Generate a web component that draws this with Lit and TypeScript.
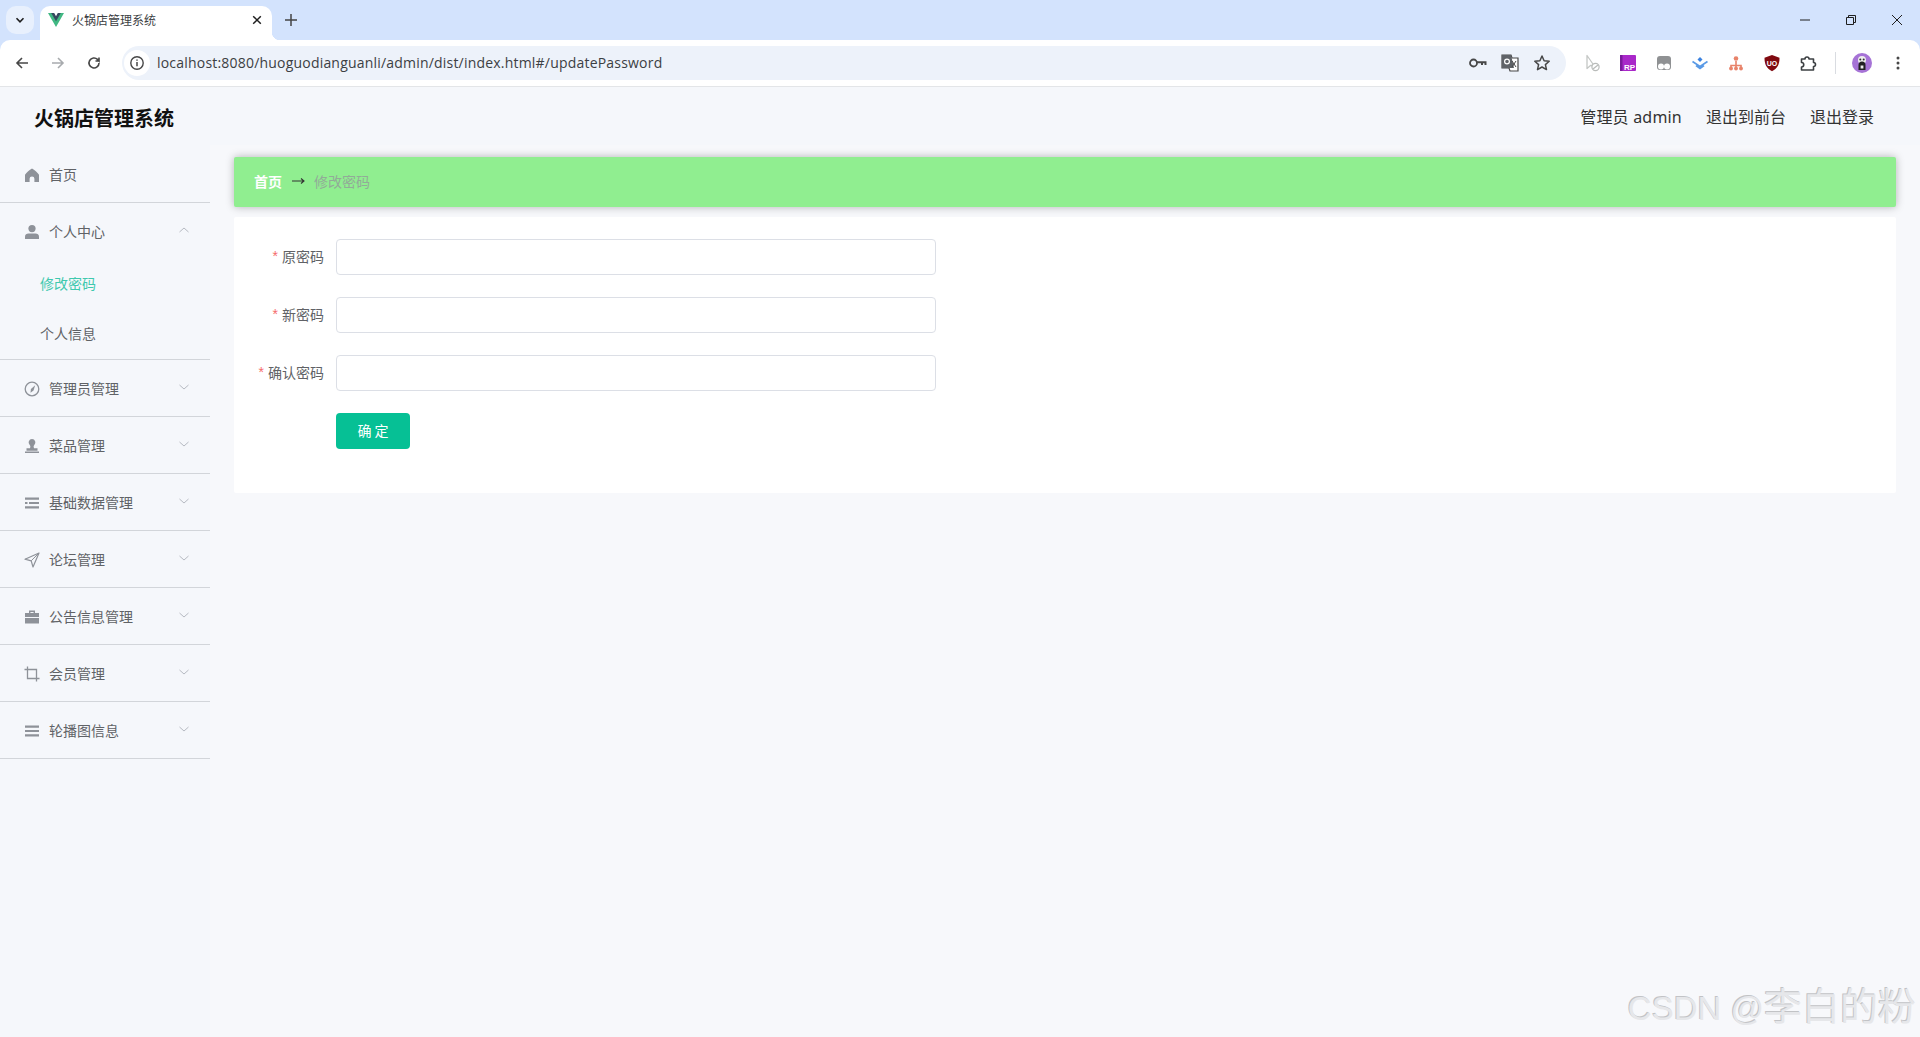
import { LitElement, html, css, svg } from 'lit';
import { customElement } from 'lit/decorators.js';
import { classMap } from 'lit/directives/class-map.js';

const icons = {
  home: svg`<path d="M8 1.500C5.500 3.200 2.600 5.300 1 7.800V15h4.600v-3.200a2.400 2.400 0 0 1 4.800 0V15H15V7.800C13.400 5.300 10.500 3.200 8 1.500z" fill="currentColor"/>`,
  user: svg`<circle cx="8" cy="4.600" r="3.600" fill="currentColor"/><path d="M1 15v-2.600C1 10.500 2.600 9.400 4.500 9.400h7c1.900 0 3.500 1.100 3.500 3V15z" fill="currentColor"/>`,
  compass: svg`<circle cx="8" cy="8" r="6.800" fill="none" stroke="currentColor" stroke-width="1.300"/><path d="M11.200 4.200 9.500 9.400 6.500 11.800 6.900 8z" fill="currentColor"/>`,
  stamp: svg`<path d="M8 1a3.400 3.400 0 0 0-2.300 5.900c.5.600.8 1.200.6 2.100L6 10.200H2.500v2.500h11v-2.500H10l-.3-1.200c-.2-.9.100-1.500.6-2.100A3.400 3.400 0 0 0 8 1z" fill="currentColor"/><rect x="1" y="13.500" width="14" height="1.500" fill="currentColor"/>`,
  fold: svg`<path d="M1 2.600h14v2.200H1zM5 6.900h10v2.200H5zM1 11.200h14v2.200H1zM1 6.900h2.500v2.200H1z" fill="currentColor"/>`,
  plane: svg`<path d="M15 1 1 7.200l6.200 1.600L9 15z" fill="none" stroke="currentColor" stroke-width="1.200" stroke-linejoin="round"/><path d="M15 1 7.200 8.800" stroke="currentColor" stroke-width="1"/>`,
  case: svg`<path d="M5 4V1.500h6V4h4v4H1V4zm1.400 0h3.200V2.900H6.400z" fill="currentColor" fill-rule="evenodd"/><path d="M1 9h14v5.500H1z" fill="currentColor"/>`,
  crop: svg`<path d="M3.500.5v12h12M.5 3.500h12v12" fill="none" stroke="currentColor" stroke-width="1.300"/>`,
  lines: svg`<path d="M1 2.600h14v2.200H1zM1 6.900h14v2.200H1zM1 11.200h14v2.200H1z" fill="currentColor"/>`,
};

type Item = { label: string; icon: keyof typeof icons; arrow?: boolean; open?: boolean; first?: boolean };

const menu: Item[] = [
  { label: '首页', icon: 'home', first: true },
  { label: '个人中心', icon: 'user', arrow: true, open: true },
  { label: '管理员管理', icon: 'compass', arrow: true },
  { label: '菜品管理', icon: 'stamp', arrow: true },
  { label: '基础数据管理', icon: 'fold', arrow: true },
  { label: '论坛管理', icon: 'plane', arrow: true },
  { label: '公告信息管理', icon: 'case', arrow: true },
  { label: '会员管理', icon: 'crop', arrow: true },
  { label: '轮播图信息', icon: 'lines', arrow: true },
];

const subMenu = [
  { label: '修改密码', active: true },
  { label: '个人信息', active: false },
];

const fields = ['原密码', '新密码', '确认密码'];

const extensions = [
  svg`<path d="M5 2.500v13l3.500-3h3.500z" fill="none" stroke="#c4c7c5" stroke-width="1.300" stroke-linejoin="round"/><circle cx="13.500" cy="14" r="3.600" fill="#fff" stroke="#b9bcba" stroke-width="1.200"/><path d="m11 16 5-4" stroke="#b9bcba" stroke-width="1.200"/>`,
  svg`<rect x="2" y="2" width="16" height="16" rx="1" fill="#a928c9"/><rect x="2" y="2" width="2.500" height="16" fill="#7a1a9c"/><text x="6" y="16.500" font-size="8" font-weight="700" fill="#fff" font-family="Liberation Sans">RP</text>`,
  svg`<path d="M3 6a3 3 0 0 1 3-3h8a3 3 0 0 1 3 3v8a3 3 0 0 1-3 3H6a3 3 0 0 1-3-3z" fill="#8f9193"/><circle cx="7" cy="13.500" r="3" fill="#fff"/><circle cx="13" cy="13.500" r="3" fill="#fff"/>`,
  svg`<path d="m2.500 8.500 7.500 5 7.500-5M6 12.500l4 3 4-3" fill="none" stroke="#5a9ae6" stroke-width="1.700"/><path d="m10 4 2.500 2.500L10 9 7.500 6.500z" fill="#3b82e0"/>`,
  svg`<circle cx="10" cy="5.500" r="2.300" fill="#e8836a"/><path d="M10 8v7M5 15v-2.500h10V15" fill="none" stroke="#e8836a" stroke-width="1.600"/><circle cx="5" cy="15.500" r="1.900" fill="#e8836a"/><circle cx="10" cy="15.500" r="1.900" fill="#e8836a"/><circle cx="15" cy="15.500" r="1.900" fill="#e8836a"/>`,
  svg`<path d="M10 2 17.500 4.800c0 6.200-1.700 10.400-7.500 13.400C4.200 15.200 2.500 11 2.500 4.800z" fill="#800a10"/><text x="10" y="12.800" text-anchor="middle" font-size="7" font-weight="700" fill="#fff" font-family="Liberation Sans">UO</text>`,
  svg`<path d="M3.500 6H7a2 2 0 0 1 4 0h4.500v3.500a2 2 0 0 1 0 4V17H3.500v-3a2.200 2.200 0 0 0 0-4.500z" fill="none" stroke="#3c4043" stroke-width="1.600" stroke-linejoin="round"/>`,
];

@customElement('app-root')
export class AppRoot extends LitElement {
  static styles = css`
    :host {
      display: block;
      position: relative;
      height: 1037px;
      overflow: hidden;
      font-family: 'Noto Sans CJK SC', 'Liberation Sans', sans-serif;
      color: #333;
      background: #f7f8fb;
    }

    /* browser chrome */
    .chrome-wrap {
      background: #d3e3fd;
    }

    .strip {
      display: flex;
      height: 40px;
      box-sizing: border-box;
      padding: 6px 0 0 6px;
    }

    .tab-list {
      width: 28px;
      height: 28px;
      border-radius: 10px;
      background: #e8f0fd;
      display: flex;
      align-items: center;
      justify-content: center;
    }

    .tab {
      position: relative;
      width: 232px;
      height: 34px;
      margin-left: 6px;
      box-sizing: border-box;
      padding: 0 9px 6px 8px;
      display: flex;
      align-items: center;
      background: #fff;
      border-radius: 10px 10px 0 0;
      font-size: 12px;
      color: #3c4043;
    }

    .tab::after {
      content: '';
      position: absolute;
      right: -8px;
      bottom: 0;
      width: 8px;
      height: 8px;
      background: radial-gradient(circle at 100% 0, transparent 8px, #fff 8.5px);
    }

    .tab-title {
      flex: 1;
      margin-left: 8px;
      padding-bottom: 1px;
    }

    .new-tab {
      width: 28px;
      height: 28px;
      margin-left: 5px;
      display: flex;
      align-items: center;
      justify-content: center;
    }

    .win {
      margin-left: auto;
      display: flex;
      margin-top: -6px;
    }

    .win div {
      width: 46px;
      height: 40px;
      display: flex;
      align-items: center;
      justify-content: center;
    }

    .toolbar {
      display: flex;
      align-items: center;
      height: 47px;
      box-sizing: border-box;
      padding: 0 4px;
      background: #fff;
      border-bottom: 1px solid #e3e5e8;
      border-radius: 10px 10px 0 0;
    }

    .btn {
      width: 36px;
      height: 36px;
      flex: none;
      display: flex;
      align-items: center;
      justify-content: center;
    }

    .omnibox {
      flex: 1;
      height: 34px;
      margin: 0 8px 0 10px;
      display: flex;
      align-items: center;
      border-radius: 17px;
      background: #edf2fa;
      padding-left: 2px;
    }

    .info {
      width: 26px;
      height: 26px;
      border-radius: 50%;
      background: #fff;
      display: flex;
      align-items: center;
      justify-content: center;
    }

    .url {
      flex: 1;
      margin-left: 7px;
      padding-bottom: 1px;
      font-family: 'Open Sans', 'Liberation Sans', sans-serif;
      font-size: 14px;
      letter-spacing: 0.2px;
      color: #3c4043;
    }

    .omni-icon {
      width: 32px;
      height: 32px;
      display: flex;
      align-items: center;
      justify-content: center;
    }

    .omni-end {
      display: flex;
      margin-right: 8px;
    }

    .divider {
      width: 18px;
      flex: none;
      display: flex;
      justify-content: center;
    }

    .divider i {
      display: block;
      width: 1px;
      height: 22px;
      background: #d9dce1;
    }

    /* app */
    .header {
      height: 58px;
      display: flex;
      align-items: center;
      justify-content: space-between;
      padding: 3px 46px 0 34px;
      box-sizing: border-box;
      background: #f5f7fb;
    }

    .brand {
      font-size: 20px;
      font-weight: 700;
      color: #111;
    }

    .user {
      display: flex;
      gap: 24px;
      font-size: 16px;
      color: #333;
      margin-top: -3px;
    }

    .user .name {
      font-family: 'Noto Sans', 'Noto Sans CJK SC', sans-serif;
      letter-spacing: 0.2px;
    }

    .body {
      display: flex;
      height: 892px;
    }

    .side {
      width: 210px;
      flex: none;
      background: #f5f7fb;
      font-size: 14px;
      color: #606266;
    }

    .item {
      position: relative;
      height: 57px;
      box-sizing: border-box;
      display: flex;
      align-items: center;
      padding-left: 24px;
      border-bottom: 1px solid #d2d5da;
    }

    .item.first {
      height: 58px;
    }

    .item.open {
      height: 55px;
      border-bottom: none;
    }

    .item svg.mi {
      width: 16px;
      height: 16px;
      margin-top: 2px;
      color: #8e9299;
      flex: none;
    }

    .item span {
      margin-left: 9px;
    }

    .item svg.arrow {
      position: absolute;
      right: 20px;
      top: 21px;
      width: 12px;
      height: 12px;
      color: #b6bac2;
    }

    .subs {
      border-bottom: 1px solid #d2d5da;
      padding-bottom: 1px;
    }

    .sub {
      height: 50px;
      display: flex;
      align-items: center;
      padding-left: 40px;
      color: #606266;
    }

    .sub.active {
      color: #3fc9ae;
    }

    .main {
      flex: 1;
      box-sizing: border-box;
      padding: 12px 24px 0 24px;
    }

    .crumb {
      height: 50px;
      box-sizing: border-box;
      padding: 0 0 2px 20px;
      display: flex;
      align-items: center;
      font-size: 14px;
      background: #90ee90;
      border-radius: 2px;
      box-shadow: 0 0 8px rgba(0, 0, 0, 0.28);
    }

    .crumb b {
      color: #fff;
      font-weight: 700;
    }

    .crumb em {
      font-style: normal;
      margin: 0 8px 0 9px;
      width: 15px;
      display: flex;
    }

    .crumb span {
      color: #92ab98;
    }

    .card {
      margin-top: 10px;
      height: 276px;
      box-sizing: border-box;
      padding-top: 22px;
      background: #fff;
      border-radius: 2px;
    }

    .form {
      display: grid;
      grid-template-columns: 90px 600px;
      column-gap: 12px;
      row-gap: 22px;
      grid-auto-rows: 36px;
      font-size: 14px;
    }

    .label {
      display: flex;
      align-items: center;
      justify-content: flex-end;
      padding-bottom: 2px;
      color: #606266;
    }

    .label i {
      font-style: normal;
      color: #f56c6c;
      margin-right: 4px;
      font-family: 'Liberation Sans', sans-serif;
    }

    .input {
      border: 1px solid #dcdfe6;
      border-radius: 4px;
      background: #fff;
      box-sizing: border-box;
    }

    .submit {
      grid-column: 2;
      width: 74px;
      height: 36px;
      padding: 0 0 2px;
      border: none;
      border-radius: 4px;
      background: #06c095;
      color: #fff;
      font: inherit;
      font-size: 14px;
    }

    .mark {
      position: absolute;
      right: 4px;
      top: 976px;
      font-family: 'Liberation Sans', 'Noto Sans CJK SC', sans-serif;
      font-size: 38px;
      color: #e6e7ea;
      text-shadow: -1px -1px 0 #c2c3c6;
      white-space: nowrap;
    }

    .mark span {
      font-size: 33px;
    }
  `;

  renderItem(item: Item) {
    return html`
      <div class=${classMap({ item: true, open: !!item.open, first: !!item.first })}>
        <svg class="mi" viewBox="0 0 16 16">${icons[item.icon]}</svg>
        <span>${item.label}</span>
        ${item.arrow
          ? html`<svg class="arrow" viewBox="0 0 12 12">
              <path d=${item.open ? 'M1.500 8 6 4l4.500 4' : 'M1.500 4 6 8l4.500-4'} fill="none" stroke="currentColor" />
            </svg>`
          : null}
      </div>
      ${item.open
        ? html`<div class="subs">
            ${subMenu.map((s) => html`<div class=${classMap({ sub: true, active: s.active })}>${s.label}</div>`)}
          </div>`
        : null}
    `;
  }

  renderChrome() {
    return html`
      <div class="chrome-wrap">
        <div class="strip">
          <div class="tab-list">
            <svg width="12" height="12" viewBox="0 0 12 12"><path d="M2.500 4.200 6 7.800l3.500-3.600" fill="none" stroke="#1f1f1f" stroke-width="1.600"/></svg>
          </div>
          <div class="tab">
            <svg width="16" height="14" viewBox="0 0 16 14">
              <path d="M0 0h4l4 7 4-7h4L8 14z" fill="#41b883"/>
              <path d="M3.200 0h3L8 3.200 9.800 0h3L8 8.200z" fill="#35495e"/>
            </svg>
            <span class="tab-title">火锅店管理系统</span>
            <svg width="12" height="12" viewBox="0 0 12 12"><path d="m2.200 2.200 7.600 7.600M9.800 2.200l-7.600 7.600" stroke="#1f1f1f" stroke-width="1.500"/></svg>
          </div>
          <div class="new-tab">
            <svg width="14" height="14" viewBox="0 0 14 14"><path d="M7 1v12M1 7h12" stroke="#444" stroke-width="1.500"/></svg>
          </div>
          <div class="win">
            <div><svg width="12" height="12" viewBox="0 0 12 12"><path d="M1 6h10" stroke="#1f1f1f"/></svg></div>
            <div><svg width="12" height="12" viewBox="0 0 12 12"><path d="M1.500 3.500h7v7h-7zM3.500 3.500v-2h7v7h-2" fill="none" stroke="#1f1f1f"/></svg></div>
            <div><svg width="12" height="12" viewBox="0 0 12 12"><path d="m1 1 10 10M11 1 1 11" stroke="#1f1f1f"/></svg></div>
          </div>
        </div>
        <div class="toolbar">
          <div class="btn"><svg width="16" height="16" viewBox="0 0 16 16"><path d="M14 8H3M8 3 3 8l5 5" fill="none" stroke="#474747" stroke-width="1.600"/></svg></div>
          <div class="btn"><svg width="16" height="16" viewBox="0 0 16 16"><path d="M2 8h11M8 3l5 5-5 5" fill="none" stroke="#a8abae" stroke-width="1.600"/></svg></div>
          <div class="btn"><svg width="16" height="16" viewBox="0 0 16 16"><path d="M13 8a5 5 0 1 1-1.500-3.600L13 6V2.500M13 6H9.500" fill="none" stroke="#474747" stroke-width="1.600"/></svg></div>
          <div class="omnibox">
            <div class="info">
              <svg width="16" height="16" viewBox="0 0 16 16"><circle cx="8" cy="8" r="6.200" fill="none" stroke="#474747" stroke-width="1.400"/><path d="M8 7v4.200M8 4.500v1.300" stroke="#474747" stroke-width="1.500"/></svg>
            </div>
            <span class="url">localhost:8080/huoguodianguanli/admin/dist/index.html#/updatePassword</span>
            <div class="omni-end">
              <div class="omni-icon"><svg width="20" height="20" viewBox="0 0 20 20"><circle cx="5.500" cy="10" r="3.500" fill="none" stroke="#474747" stroke-width="1.800"/><path d="M9 8.300h9.500V12h-2v-1.700h-1.500V12h-2v-1.700H9z" fill="#474747"/></svg></div>
              <div class="omni-icon"><svg width="20" height="20" viewBox="0 0 20 20"><path d="M2 2h9l1 3h6v13h-8l-1-3H2z" fill="#fff" stroke="#474747" stroke-width="1.200"/><path d="M2 2h9l3 13H2z" fill="#5f6368"/><path d="m12 8 4 6M16 8l-4 6" stroke="#474747"/><circle cx="7" cy="8.500" r="2.400" fill="none" stroke="#fff" stroke-width="1.200"/></svg></div>
              <div class="omni-icon"><svg width="18" height="18" viewBox="0 0 18 18"><path d="m9 2 2.100 4.700 5.100.5-3.800 3.400 1.100 5L9 13l-4.500 2.600 1.100-5L1.800 7.200l5.100-.5z" fill="none" stroke="#474747" stroke-width="1.500" stroke-linejoin="round"/></svg></div>
            </div>
          </div>
          ${extensions.map((e) => html`<div class="btn"><svg width="20" height="20" viewBox="0 0 20 20">${e}</svg></div>`)}
          <div class="divider"><i></i></div>
          <div class="btn">
            <svg width="20" height="20" viewBox="0 0 20 20">
              <circle cx="10" cy="10" r="10" fill="#a673d6"/>
              <circle cx="10" cy="7" r="4" fill="#eee"/>
              <circle cx="8.300" cy="6.500" r="1" fill="#333"/>
              <circle cx="11.700" cy="6.500" r="1" fill="#333"/>
              <path d="M6.500 17v-5a3.500 3.500 0 0 1 7 0v5z" fill="#222"/>
              <rect x="8.600" y="12.500" width="2.800" height="3" fill="#eee"/>
            </svg>
          </div>
          <div class="btn"><svg width="16" height="16" viewBox="0 0 16 16"><circle cx="8" cy="3" r="1.500" fill="#474747"/><circle cx="8" cy="8" r="1.500" fill="#474747"/><circle cx="8" cy="13" r="1.500" fill="#474747"/></svg></div>
        </div>
      </div>
    `;
  }

  render() {
    return html`
      ${this.renderChrome()}
      <header class="header">
        <div class="brand">火锅店管理系统</div>
        <div class="user">
          <span class="name">管理员 admin</span>
          <span>退出到前台</span>
          <span>退出登录</span>
        </div>
      </header>
      <div class="body">
        <nav class="side">${menu.map((m) => this.renderItem(m))}</nav>
        <main class="main">
          <div class="crumb">
            <b>首页</b>
            <em><svg width="15" height="10" viewBox="0 0 15 10"><path d="M1 5h12M10 2.500 13 5l-3 2.500" fill="none" stroke="#333" stroke-width="1.100"/></svg></em>
            <span>修改密码</span>
          </div>
          <div class="card">
            <div class="form">
              ${fields.map(
                (f) => html`
                  <div class="label"><i>*</i>${f}</div>
                  <div class="input"></div>
                `,
              )}
              <button class="submit">确 定</button>
            </div>
          </div>
        </main>
      </div>
      <div class="mark"><span>CSDN @</span>李白的粉</div>
    `;
  }
}
